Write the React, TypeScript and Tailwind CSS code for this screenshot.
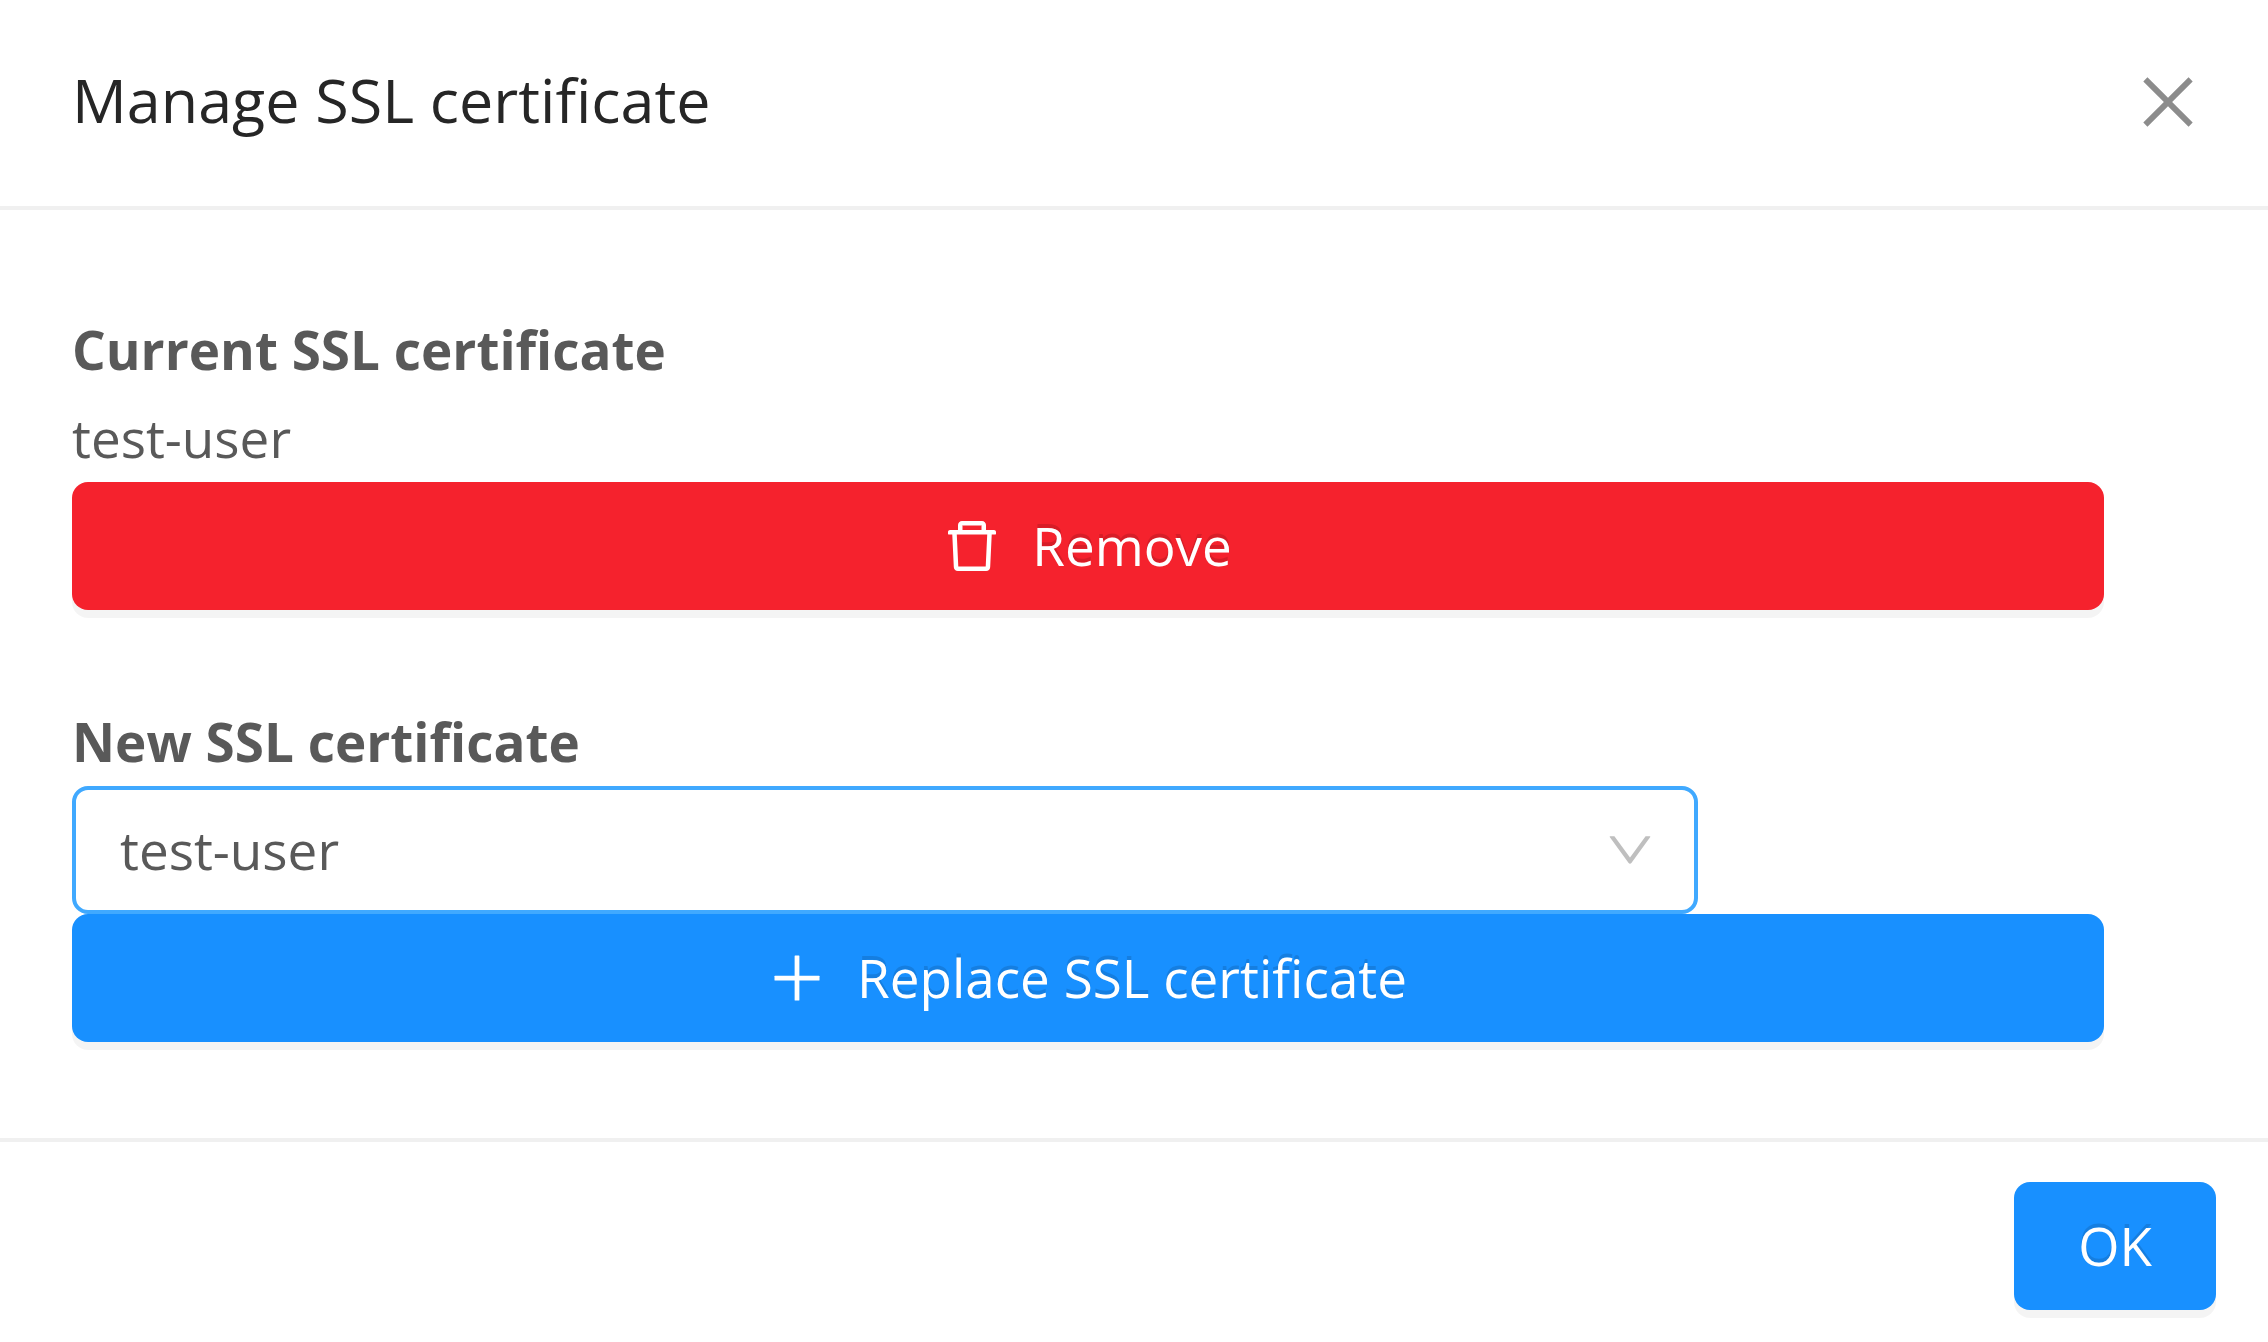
import { useState } from 'react';
import type { ButtonHTMLAttributes } from 'react';
import { clsx } from 'clsx';
import {
  AiOutlineClose,
  AiOutlineDelete,
  AiOutlineDown,
  AiOutlinePlus,
} from 'react-icons/ai';

// trims the empty margin that the Ant icons have around their glyph
const ICON_BOX = '64 64 896 896';

interface ButtonProps extends ButtonHTMLAttributes<HTMLButtonElement> {
  danger?: boolean;
}

function Button({ danger, className, children, ...props }: ButtonProps) {
  return (
    <button
      type="button"
      className={clsx(
        'flex h-32 items-center justify-center gap-8 rounded-2xl text-[53px] text-white',
        'shadow-[0_8px_0_rgba(0,0,0,0.045)] [text-shadow:0_-4px_0_rgba(0,0,0,0.12)]',
        danger ? 'bg-[#f5222d]' : 'bg-[#1890ff]',
        className,
      )}
      {...props}
    >
      {children}
    </button>
  );
}

export default function App() {
  const [certificate, setCertificate] = useState('test-user');

  return (
    <div
      role="dialog"
      aria-labelledby="dialog-title"
      className="min-h-screen bg-white font-['Open_Sans',sans-serif] text-[53px] leading-[88px] text-[#595959] [font-variant-ligatures:none]"
    >
      <header className="flex items-end justify-between border-b-4 border-[#f0f0f0] pt-14 pr-17 pb-[62px] pl-18">
        <h1 id="dialog-title" className="text-[61px] text-[#262626]">
          Manage SSL certificate
        </h1>
        <button
          type="button"
          aria-label="Close"
          className="flex h-21 items-center text-[#8c8c8c]"
        >
          <AiOutlineClose viewBox={ICON_BOX} className="size-16" />
        </button>
      </header>

      <main className="flex flex-col gap-22 py-24 pr-41 pl-18">
        <section>
          <h2 className="font-bold">Current SSL certificate</h2>
          <p>test-user</p>
          <Button danger className="w-full">
            <AiOutlineDelete viewBox={ICON_BOX} className="size-14" />
            Remove
          </Button>
        </section>

        <section>
          <label htmlFor="certificate" className="block font-bold">
            New SSL certificate
          </label>
          <div className="relative w-4/5">
            <select
              id="certificate"
              value={certificate}
              onChange={(e) => setCertificate(e.target.value)}
              className="block h-32 w-full appearance-none rounded-2xl border-4 border-[#40a9ff] bg-white px-11 outline-none"
            >
              <option value="test-user">test-user</option>
            </select>
            <AiOutlineDown
              viewBox={ICON_BOX}
              className="pointer-events-none absolute top-10 right-11 size-12 text-[#bfbfbf]"
            />
          </div>
          <Button className="w-full">
            <AiOutlinePlus viewBox={ICON_BOX} className="size-14" />
            Replace SSL certificate
          </Button>
        </section>
      </main>

      <footer className="flex justify-end border-t-4 border-[#f0f0f0] py-10 pr-13">
        <Button className="px-16">OK</Button>
      </footer>
    </div>
  );
}
